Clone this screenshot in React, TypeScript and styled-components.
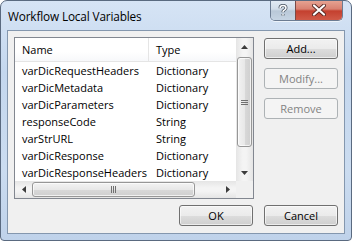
import { createGlobalStyle, styled } from 'styled-components';

const GlobalStyle = createGlobalStyle`
    html, body {
        margin: 0;
        padding: 0;
        background: #ffffff;
    }
    body {
        font-family: 'Segoe UI', 'Open Sans', 'Noto Sans', sans-serif;
        font-size: 11px;
        color: #000000;
    }
`;

const Window = styled.div`
    box-sizing: border-box;
    width: 352px;
    height: 241px;
    border: 1px solid #5a6a80;
    border-radius: 7px 7px 4px 4px;
    padding: 0 6px 6px;
    display: flex;
    flex-direction: column;
    background: linear-gradient(to bottom, #d6e4f5 0%, #c4d7ee 30%, #cbdcf0 70%, #bfd2ea 100%);
    overflow: hidden;
`;

const TitleBar = styled.div`
    height: 29px;
    display: flex;
    align-items: flex-start;
    padding-left: 1px;
`;

const Title = styled.span`
    margin-top: 7px;
    font-size: 11.8px;
    color: #000000;
    letter-spacing: -0.15px;
`;

const CaptionButtons = styled.div`
    margin-left: auto;
    margin-top: -1px;
    margin-right: 2px;
    display: flex;
    border: 1px solid #6c7c92;
    border-top: none;
    border-radius: 0 0 5px 5px;
    overflow: hidden;
    box-shadow: 0 1px 0 rgba(255, 255, 255, 0.6);
`;

const CaptionButton = styled.div<{ $variant: 'help' | 'close' }>`
    height: 20px;
    width: ${({ $variant }) => ($variant === 'close' ? '46px' : '24px')};
    display: flex;
    align-items: center;
    justify-content: center;
    border-left: ${({ $variant }) => ($variant === 'close' ? '1px solid #7a4a46' : 'none')};
    background: ${({ $variant }) =>
        $variant === 'close'
            ? 'linear-gradient(to bottom, #e8a695 0%, #d98171 45%, #c4402f 55%, #d05a48 100%)'
            : 'linear-gradient(to bottom, #e4ecf5 0%, #d2dde9 45%, #b9c8d8 55%, #c6d4e3 100%)'};
`;

const Client = styled.div`
    flex: 1;
    border: 1px solid #8497ae;
    background: #f0f0f0;
    padding: 6px 6px 7px;
    display: flex;
    flex-direction: column;
`;

const TopRow = styled.div`
    display: flex;
    gap: 10px;
`;

const ListView = styled.div`
    box-sizing: border-box;
    width: 240px;
    height: 162px;
    border: 1px solid #828790;
    background: #ffffff;
    display: grid;
    grid-template-columns: 1fr 17px;
    grid-template-rows: 1fr 17px;
`;

const ListContent = styled.div`
    overflow: hidden;
`;

const HeaderRow = styled.div`
    display: flex;
    height: 23px;
    border-bottom: 1px solid #e5e5e5;
    background: linear-gradient(to bottom, #ffffff 0%, #ffffff 60%, #f7f8fa 100%);
`;

const HeaderCell = styled.div<{ $width?: number; $sep?: boolean }>`
    box-sizing: border-box;
    width: ${({ $width }) => ($width ? `${$width}px` : 'auto')};
    flex: ${({ $width }) => ($width ? 'none' : '1')};
    padding-left: 7px;
    display: flex;
    align-items: center;
    border-right: ${({ $sep }) => ($sep ? '1px solid #e5e5e5' : 'none')};
    white-space: nowrap;
`;

const Row = styled.div`
    display: flex;
    height: 17px;
    align-items: center;
`;

const Cell = styled.div<{ $width?: number }>`
    box-sizing: border-box;
    width: ${({ $width }) => ($width ? `${$width}px` : 'auto')};
    flex: ${({ $width }) => ($width ? 'none' : '1')};
    padding-left: 7px;
    white-space: nowrap;
    overflow: hidden;
`;

const ScrollBar = styled.div<{ $vertical?: boolean }>`
    display: flex;
    flex-direction: ${({ $vertical }) => ($vertical ? 'column' : 'row')};
    align-items: stretch;
    background: ${({ $vertical }) =>
        $vertical
            ? 'linear-gradient(to right, #e5e5e5, #f4f4f4 40%, #f4f4f4 60%, #e5e5e5)'
            : 'linear-gradient(to bottom, #e5e5e5, #f4f4f4 40%, #f4f4f4 60%, #e5e5e5)'};
`;

const ArrowBox = styled.div<{ $vertical?: boolean }>`
    flex: none;
    width: ${({ $vertical }) => ($vertical ? 'auto' : '17px')};
    height: ${({ $vertical }) => ($vertical ? '17px' : 'auto')};
    display: flex;
    align-items: center;
    justify-content: center;
`;

const Track = styled.div<{ $vertical?: boolean }>`
    flex: 1;
    display: flex;
    flex-direction: ${({ $vertical }) => ($vertical ? 'column' : 'row')};
    padding: ${({ $vertical }) => ($vertical ? '2px 1px 0' : '1px 0 1px 0')};
`;

const Thumb = styled.div<{ $vertical?: boolean; $size: number }>`
    box-sizing: border-box;
    flex: none;
    width: ${({ $vertical, $size }) => ($vertical ? 'auto' : `${$size}px`)};
    height: ${({ $vertical, $size }) => ($vertical ? `${$size}px` : 'auto')};
    border: 1px solid #979797;
    border-radius: 3px;
    display: flex;
    align-items: center;
    justify-content: center;
    background: ${({ $vertical }) =>
        $vertical
            ? 'linear-gradient(to right, #f3f3f3 0%, #e8e8e8 50%, #d9d9d9 51%, #cfcfcf 100%)'
            : 'linear-gradient(to bottom, #f3f3f3 0%, #e8e8e8 50%, #d9d9d9 51%, #cfcfcf 100%)'};
    box-shadow: inset 0 0 0 1px rgba(255, 255, 255, 0.7);
`;

const Corner = styled.div`
    background: #f0f0f0;
`;

const ButtonColumn = styled.div`
    display: flex;
    flex-direction: column;
    gap: 9px;
    padding-top: 1px;
`;

const Button = styled.div<{ $disabled?: boolean }>`
    box-sizing: border-box;
    width: 74px;
    height: 21px;
    border: 1px solid ${({ $disabled }) => ($disabled ? '#adb2b5' : '#707070')};
    border-radius: 3px;
    display: flex;
    align-items: center;
    justify-content: center;
    color: ${({ $disabled }) => ($disabled ? '#838383' : '#000000')};
    background: ${({ $disabled }) =>
        $disabled
            ? '#f4f4f4'
            : 'linear-gradient(to bottom, #f2f2f2 0%, #ebebeb 50%, #dddddd 51%, #cfcfcf 100%)'};
    box-shadow: inset 0 0 0 1px ${({ $disabled }) => ($disabled ? '#f4f4f4' : 'rgba(255, 255, 255, 0.6)')};
`;

const FooterRow = styled.div`
    margin-top: auto;
    display: flex;
    justify-content: flex-end;
    gap: 11px;
`;

const Arrow = ({ dir }: { dir: 'up' | 'down' | 'left' | 'right' }) => {
    const pts = {
        up: '0,4 7,4 3.5,0',
        down: '0,0 7,0 3.5,4',
        left: '4,0 4,7 0,3.5',
        right: '0,0 0,7 4,3.5'
    }[dir];
    const vertical = dir === 'up' || dir === 'down';
    return (
        <svg width={vertical ? 7 : 4} height={vertical ? 4 : 7} viewBox={vertical ? '0 0 7 4' : '0 0 4 7'}>
            <polygon points={pts} fill="#3c3c3c" />
        </svg>
    );
};

const Grip = ({ vertical }: { vertical?: boolean }) =>
    vertical ? (
        <svg width="7" height="7" viewBox="0 0 7 7">
            <path d="M0 1.5h7M0 3.5h7M0 5.5h7" stroke="#707070" strokeWidth="1" />
        </svg>
    ) : (
        <svg width="7" height="7" viewBox="0 0 7 7">
            <path d="M1.5 0v7M3.5 0v7M5.5 0v7" stroke="#707070" strokeWidth="1" />
        </svg>
    );

const VARIABLES = [
    { name: 'varDicRequestHeaders', type: 'Dictionary' },
    { name: 'varDicMetadata', type: 'Dictionary' },
    { name: 'varDicParameters', type: 'Dictionary' },
    { name: 'responseCode', type: 'String' },
    { name: 'varStrURL', type: 'String' },
    { name: 'varDicResponse', type: 'Dictionary' },
    { name: 'varDicResponseHeaders', type: 'Dictionary' }
];

const NAME_WIDTH = 134;

const App = () => {
    return (
        <>
            <GlobalStyle />
            <Window>
                <TitleBar>
                    <Title>Workflow Local Variables</Title>
                    <CaptionButtons>
                        <CaptionButton $variant="help">
                            <svg width="10" height="13" viewBox="0 0 10 13">
                                <path
                                    d="M2 4.2C2 2.3 3.3 1.5 5 1.5s3 .9 3 2.4c0 1.6-1.6 2-2.6 2.9-.4.4-.4.8-.4 1.4M5 10v1.6"
                                    fill="none"
                                    stroke="#46505e"
                                    strokeWidth="3"
                                />
                                <path
                                    d="M2 4.2C2 2.3 3.3 1.5 5 1.5s3 .9 3 2.4c0 1.6-1.6 2-2.6 2.9-.4.4-.4.8-.4 1.4M5 10v1.6"
                                    fill="none"
                                    stroke="#ffffff"
                                    strokeWidth="1.5"
                                />
                            </svg>
                        </CaptionButton>
                        <CaptionButton $variant="close">
                            <svg width="14" height="12" viewBox="0 0 14 12">
                                <path d="M2 1.5l10 9M12 1.5l-10 9" stroke="#5a2a24" strokeWidth="4" strokeLinecap="round" />
                                <path d="M2 1.5l10 9M12 1.5l-10 9" stroke="#ffffff" strokeWidth="2.2" strokeLinecap="round" />
                            </svg>
                        </CaptionButton>
                    </CaptionButtons>
                </TitleBar>
                <Client>
                    <TopRow>
                        <ListView>
                            <ListContent>
                                <HeaderRow>
                                    <HeaderCell $width={NAME_WIDTH} $sep>
                                        Name
                                    </HeaderCell>
                                    <HeaderCell>Type</HeaderCell>
                                </HeaderRow>
                                {VARIABLES.map((v) => (
                                    <Row key={v.name}>
                                        <Cell $width={NAME_WIDTH}>{v.name}</Cell>
                                        <Cell>{v.type}</Cell>
                                    </Row>
                                ))}
                            </ListContent>
                            <ScrollBar $vertical>
                                <ArrowBox $vertical>
                                    <Arrow dir="up" />
                                </ArrowBox>
                                <Track $vertical>
                                    <Thumb $vertical $size={90}>
                                        <Grip vertical />
                                    </Thumb>
                                </Track>
                                <ArrowBox $vertical>
                                    <Arrow dir="down" />
                                </ArrowBox>
                            </ScrollBar>
                            <ScrollBar>
                                <ArrowBox>
                                    <Arrow dir="left" />
                                </ArrowBox>
                                <Track>
                                    <Thumb $size={163}>
                                        <Grip />
                                    </Thumb>
                                </Track>
                                <ArrowBox>
                                    <Arrow dir="right" />
                                </ArrowBox>
                            </ScrollBar>
                            <Corner />
                        </ListView>
                        <ButtonColumn>
                            <Button>Add...</Button>
                            <Button $disabled>Modify...</Button>
                            <Button $disabled>Remove</Button>
                        </ButtonColumn>
                    </TopRow>
                    <FooterRow>
                        <Button>OK</Button>
                        <Button>Cancel</Button>
                    </FooterRow>
                </Client>
            </Window>
        </>
    );
};

export default App;
